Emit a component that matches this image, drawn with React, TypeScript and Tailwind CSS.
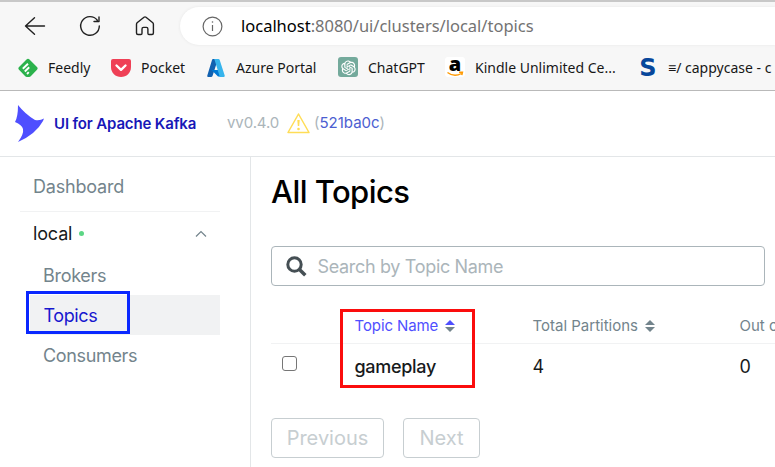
import React from "react";
import { AiOutlineOpenAI } from "react-icons/ai";

const Sort = ({ active = false }: { active?: boolean }) => (
  <svg width="10" height="12" viewBox="0 0 10 12" className="ml-[7px] shrink-0">
    <path d="M5 0L10 5H0Z" fill={active ? "#4f4fff" : "#73848c"} />
    <path d="M0 7H10L5 12Z" fill="#73848c" />
  </svg>
);

const Bookmark = ({ icon, label, width, spacing }: { icon: React.ReactNode; label: string; width: string; spacing: string }) => (
  <div className={`flex shrink-0 items-center ${width}`}>
    <span className="flex h-5 w-5 shrink-0 items-center justify-center">{icon}</span>
    <span className={`mb-[2px] ml-[10px] whitespace-nowrap ${spacing}`}>{label}</span>
  </div>
);

const Browser = () => (
  <div className="h-[91px] shrink-0 overflow-hidden border-t-2 border-b border-t-[#c8c8c8] border-b-[#b9b9b9] bg-[#f7f7f7] font-['Noto_Sans',sans-serif]">
    <div className="flex h-[48px] items-center pl-[24px]">
      <svg className="shrink-0" width="156" height="24" viewBox="0 0 156 24" fill="none" stroke="#202020" strokeWidth="1.4" strokeLinecap="round" strokeLinejoin="round">
        <path d="M10.5 3.7L1.5 12L10.5 20.3M1.5 12H20.5" />
        <path d="M73.3 6.2A9.3 9.3 0 1 0 75.3 12M75 3V7.5H70" />
        <path d="M112.5 10.2Q112.5 9.4 113.1 8.8L120 3.2Q121 2.5 122 3.2L128.8 8.8Q129.4 9.4 129.4 10.2V19Q129.4 20.5 128 20.5H125Q123.9 20.5 123.9 19.3V15Q123.9 13.4 122.4 13.4H119.5Q118 13.4 118 15V19.3Q118 20.5 116.9 20.5H114Q112.5 20.5 112.5 19Z" />
      </svg>
      <div className="flex h-[38px] flex-1 items-center rounded-l-full bg-white pl-[22px] shadow-[0_0_3px_#e5e5e5]">
        <svg className="shrink-0" width="21" height="21" viewBox="0 0 21 21" fill="none" stroke="#666" strokeWidth="1.2">
          <circle cx="10.5" cy="10.5" r="9.4" />
          <path d="M10.5 9V15" />
          <circle cx="10.5" cy="6" r=".8" fill="#666" stroke="none" />
        </svg>
        <span className="ml-[18px] whitespace-nowrap text-[16.5px] tracking-[-0.01px] text-[#737373]"><span className="text-black">localhost</span>:8080/ui/clusters/local/topics</span>
      </div>
    </div>
    <div className="flex h-[36px] items-center pl-[18px] text-[14px] text-[#171717]">
      <Bookmark width="w-[93px]" spacing="tracking-[0px]" label="Feedly" icon={
        <svg width="20" height="20" viewBox="0 0 20 20">
          <path d="M8.5 1.5Q10 .2 11.5 1.5L19 9Q20.3 10.3 19 11.7L13 18Q12.2 19 11 19H9Q7.8 19 7 18L1 11.7Q-.3 10.3 1 9Z" fill="#2bb24c" />
          <path d="M4.8 10.8L10 5.7M6.8 13.5L11.2 9.3M9 16L10.8 14.2" fill="none" stroke="#fff" strokeWidth="1.9" />
        </svg>} />
      <Bookmark width="w-[95px]" spacing="tracking-[0px]" label="Pocket" icon={
        <svg width="20" height="20" viewBox="0 0 20 20">
          <path d="M2 1H18Q20 1 20 3V9C20 15 15.5 19 10 19S0 15 0 9V3Q0 1 2 1Z" fill="#ef4056" />
          <path d="M5.5 7.5L10 11.8L14.5 7.5" fill="none" stroke="#fff" strokeWidth="2.4" strokeLinecap="round" strokeLinejoin="round" />
        </svg>} />
      <Bookmark width="w-[132px]" spacing="tracking-[0px]" label="Azure Portal" icon={
        <svg width="20" height="20" viewBox="0 0 20 20">
          <path d="M7 1H12L6.5 18Q6.2 19 5 19H2Q.8 19 1.3 17.6L6 2Q6.3 1 7 1Z" fill="#1261b0" />
          <path d="M5.5 12H13L15 18.5H12Z" fill="#0078d4" />
          <path d="M8 1H12.5Q13.4 1 13.7 2L18.7 17.6Q19.1 19 17.8 19H13Q13.8 18.5 13.3 17.3L8.7 2.2Q8.4 1.2 8 1Z" fill="#37b4ec" />
        </svg>} />
      <Bookmark width="w-[107px]" spacing="tracking-[0px]" label="ChatGPT" icon={<span className="mb-[2px] flex h-5 w-5 shrink-0 items-center justify-center rounded-[3px] bg-[#74aa9c] text-white"><AiOutlineOpenAI size={19} /></span>} />
      <Bookmark width="w-[193px]" spacing="tracking-[0px]" label="Kindle Unlimited Ce..." icon={
        <span className="relative mb-[2px] flex h-5 w-5 shrink-0 justify-center rounded-[3px] bg-white font-['Open_Sans',sans-serif] text-[20px] leading-[13px] font-extrabold text-black">a
          <svg className="absolute bottom-0 left-0" width="20" height="6" viewBox="0 0 20 6" fill="none" stroke="#f90" strokeWidth="1.4"><path d="M2.5 1.5Q9 6.5 16.5 2.5M14 1.3L17.5 1.2L16.8 4.2" /></svg>
        </span>} />
      <Bookmark width="w-[150px]" spacing="tracking-[0px]" label="≡/ cappycase - c" icon={<span className="font-['DejaVu_Sans',sans-serif] text-[24px] leading-5 font-bold text-[#07479b]">S</span>} />
    </div>
  </div>
);

const Sidebar = () => (
  <aside className="w-[251px] shrink-0 border-r border-[#e3e6e8] pl-[20px] text-[18px] text-[#73848c]">
    <nav className="w-[200px]">
      <div className="flex h-[55px] items-center border-b border-[#f1f2f3] pt-[5px] pl-[13px]"><span className="tracking-[-0.2px]">Dashboard</span></div>
      <div className="flex h-[43px] items-center pl-[13px] text-[#171a1c]">
        <span className="tracking-[-0.15px]">local</span>
        <span className="ml-[7px] h-[5px] w-[5px] rounded-full bg-[#5cd685]" />
        <svg className="mr-[13px] ml-auto" width="12" height="8" viewBox="0 0 12 8" fill="none" stroke="#73848c" strokeWidth="1.2"><path d="M1 6.5L6 1.5L11 6.5" /></svg>
      </div>
      <div className="flex h-[40px] items-center pl-[23px]"><span className="tracking-[-0.3px]">Brokers</span></div>
      <div className="relative ml-[10px] flex h-[40px] items-center bg-[#f1f2f3] pl-[13.5px] text-[#1717cf]">
        <span className="tracking-[-0.4px]">Topics</span>
        <span className="absolute -top-[4px] -left-[4px] h-[43px] w-[104px] border-3 border-[#0a28ff]" />
      </div>
      <div className="flex h-[40px] items-center pl-[23px]"><span className="tracking-[-0.35px]">Consumers</span></div>
    </nav>
  </aside>
);

export default function App() {
  return (
    <div className="flex h-[467px] w-[775px] flex-col overflow-hidden bg-white font-['Inter',sans-serif]">
      <Browser />
      <header className="flex h-[66px] shrink-0 items-center border-b border-[#e3e6e8] pl-[15px]">
        <svg className="shrink-0" width="29" height="38" viewBox="0 0 29 38"><path d="M3 0Q10 9 20 15Q25 16 29 13.5L28 16Q21 29 3 37Q9 29 8 24Q7 20 0 17Q3 12 3 0Z" fill="#4f4fff" /></svg>
        <span className="mt-[2px] ml-[10px] w-[173px] shrink-0 text-[15px] font-semibold tracking-[-0.15px] whitespace-nowrap text-[#1717b8]">UI for Apache Kafka</span>
        <span className="w-[60px] text-[15px] tracking-[-0.1px] text-[#abb5ba]">vv0.4.0</span>
        <svg className="shrink-0" width="23" height="21" viewBox="0 0 23 21" fill="none" stroke="#ffdd57" strokeWidth="1.5" strokeLinejoin="round"><path d="M11.5 1L22 19.5H1Z" /><path d="M10.3 7H12.7L12.2 13H10.8Z" fill="#ffdd57" stroke="none" /><circle cx="11.5" cy="16" r="1.3" fill="#ffdd57" stroke="none" /></svg>
        <span className="ml-[4px] text-[15px] text-[#abb5ba]">(<span className="text-[#4c5ed1]">521ba0c</span>)</span>
      </header>
      <div className="flex min-h-0 flex-1">
        <Sidebar />
        <main className="min-w-0 flex-1 overflow-hidden pl-[20px]">
          <h1 className="flex h-[89px] items-start pt-[14px] text-[31px] leading-[42px] font-medium text-black"><span className="tracking-[-0.55px]">All Topics</span></h1>
          <div className="flex h-[40px] w-[494px] items-center rounded-[4px] border border-[#abb5ba] pl-[14px] text-[18px] text-[#abb5ba]">
            <svg className="mr-[10.5px] shrink-0" width="21" height="21" viewBox="0 0 21 21" fill="none" stroke="#454f54" strokeWidth="3"><circle cx="8.5" cy="8.5" r="6.7" /><path d="M13.2 13.2L19.3 19.3" strokeWidth="3.5" /></svg>
            <span className="tracking-[-0.33px]">Search by Topic Name</span>
          </div>
          <div className="relative mt-[23px] w-[600px]">
            <div className="grid h-[35px] grid-cols-[83.5px_178px_207px_131px] items-center border-b border-[#f1f2f3] text-[15px] text-[#73848c]">
              <span />
              <span className="flex items-center text-[#4f4fff]"><span className="tracking-[-0.1px]">Topic Name</span><Sort active /></span>
              <span className="flex items-center"><span>Total Partitions</span><Sort /></span>
              <span>Out of sync</span>
            </div>
            <div className="grid h-[44px] grid-cols-[83.5px_178px_207px_131px] items-center text-[18px] text-[#171a1c]">
              <span className="mb-[5px] ml-[10.5px] h-[15px] w-[15px] rounded-[3px] border border-[#767676]" />
              <span className="font-medium tracking-[-0.3px]">gameplay</span>
              <span>4</span>
              <span>0</span>
            </div>
            <span className="absolute top-0 left-[69px] h-[79px] w-[135px] border-3 border-[#fb0d0d]" />
          </div>
          <div className="mt-[30px] flex gap-[19px] text-[20px] text-[#c7ced1]">
            <div className="flex h-[40px] w-[113px] items-center justify-center rounded-[4px] border border-[#c7ced1]">Previous</div>
            <div className="flex h-[40px] w-[77px] items-center justify-center rounded-[4px] border border-[#c7ced1]">Next</div>
          </div>
        </main>
      </div>
    </div>
  );
}
